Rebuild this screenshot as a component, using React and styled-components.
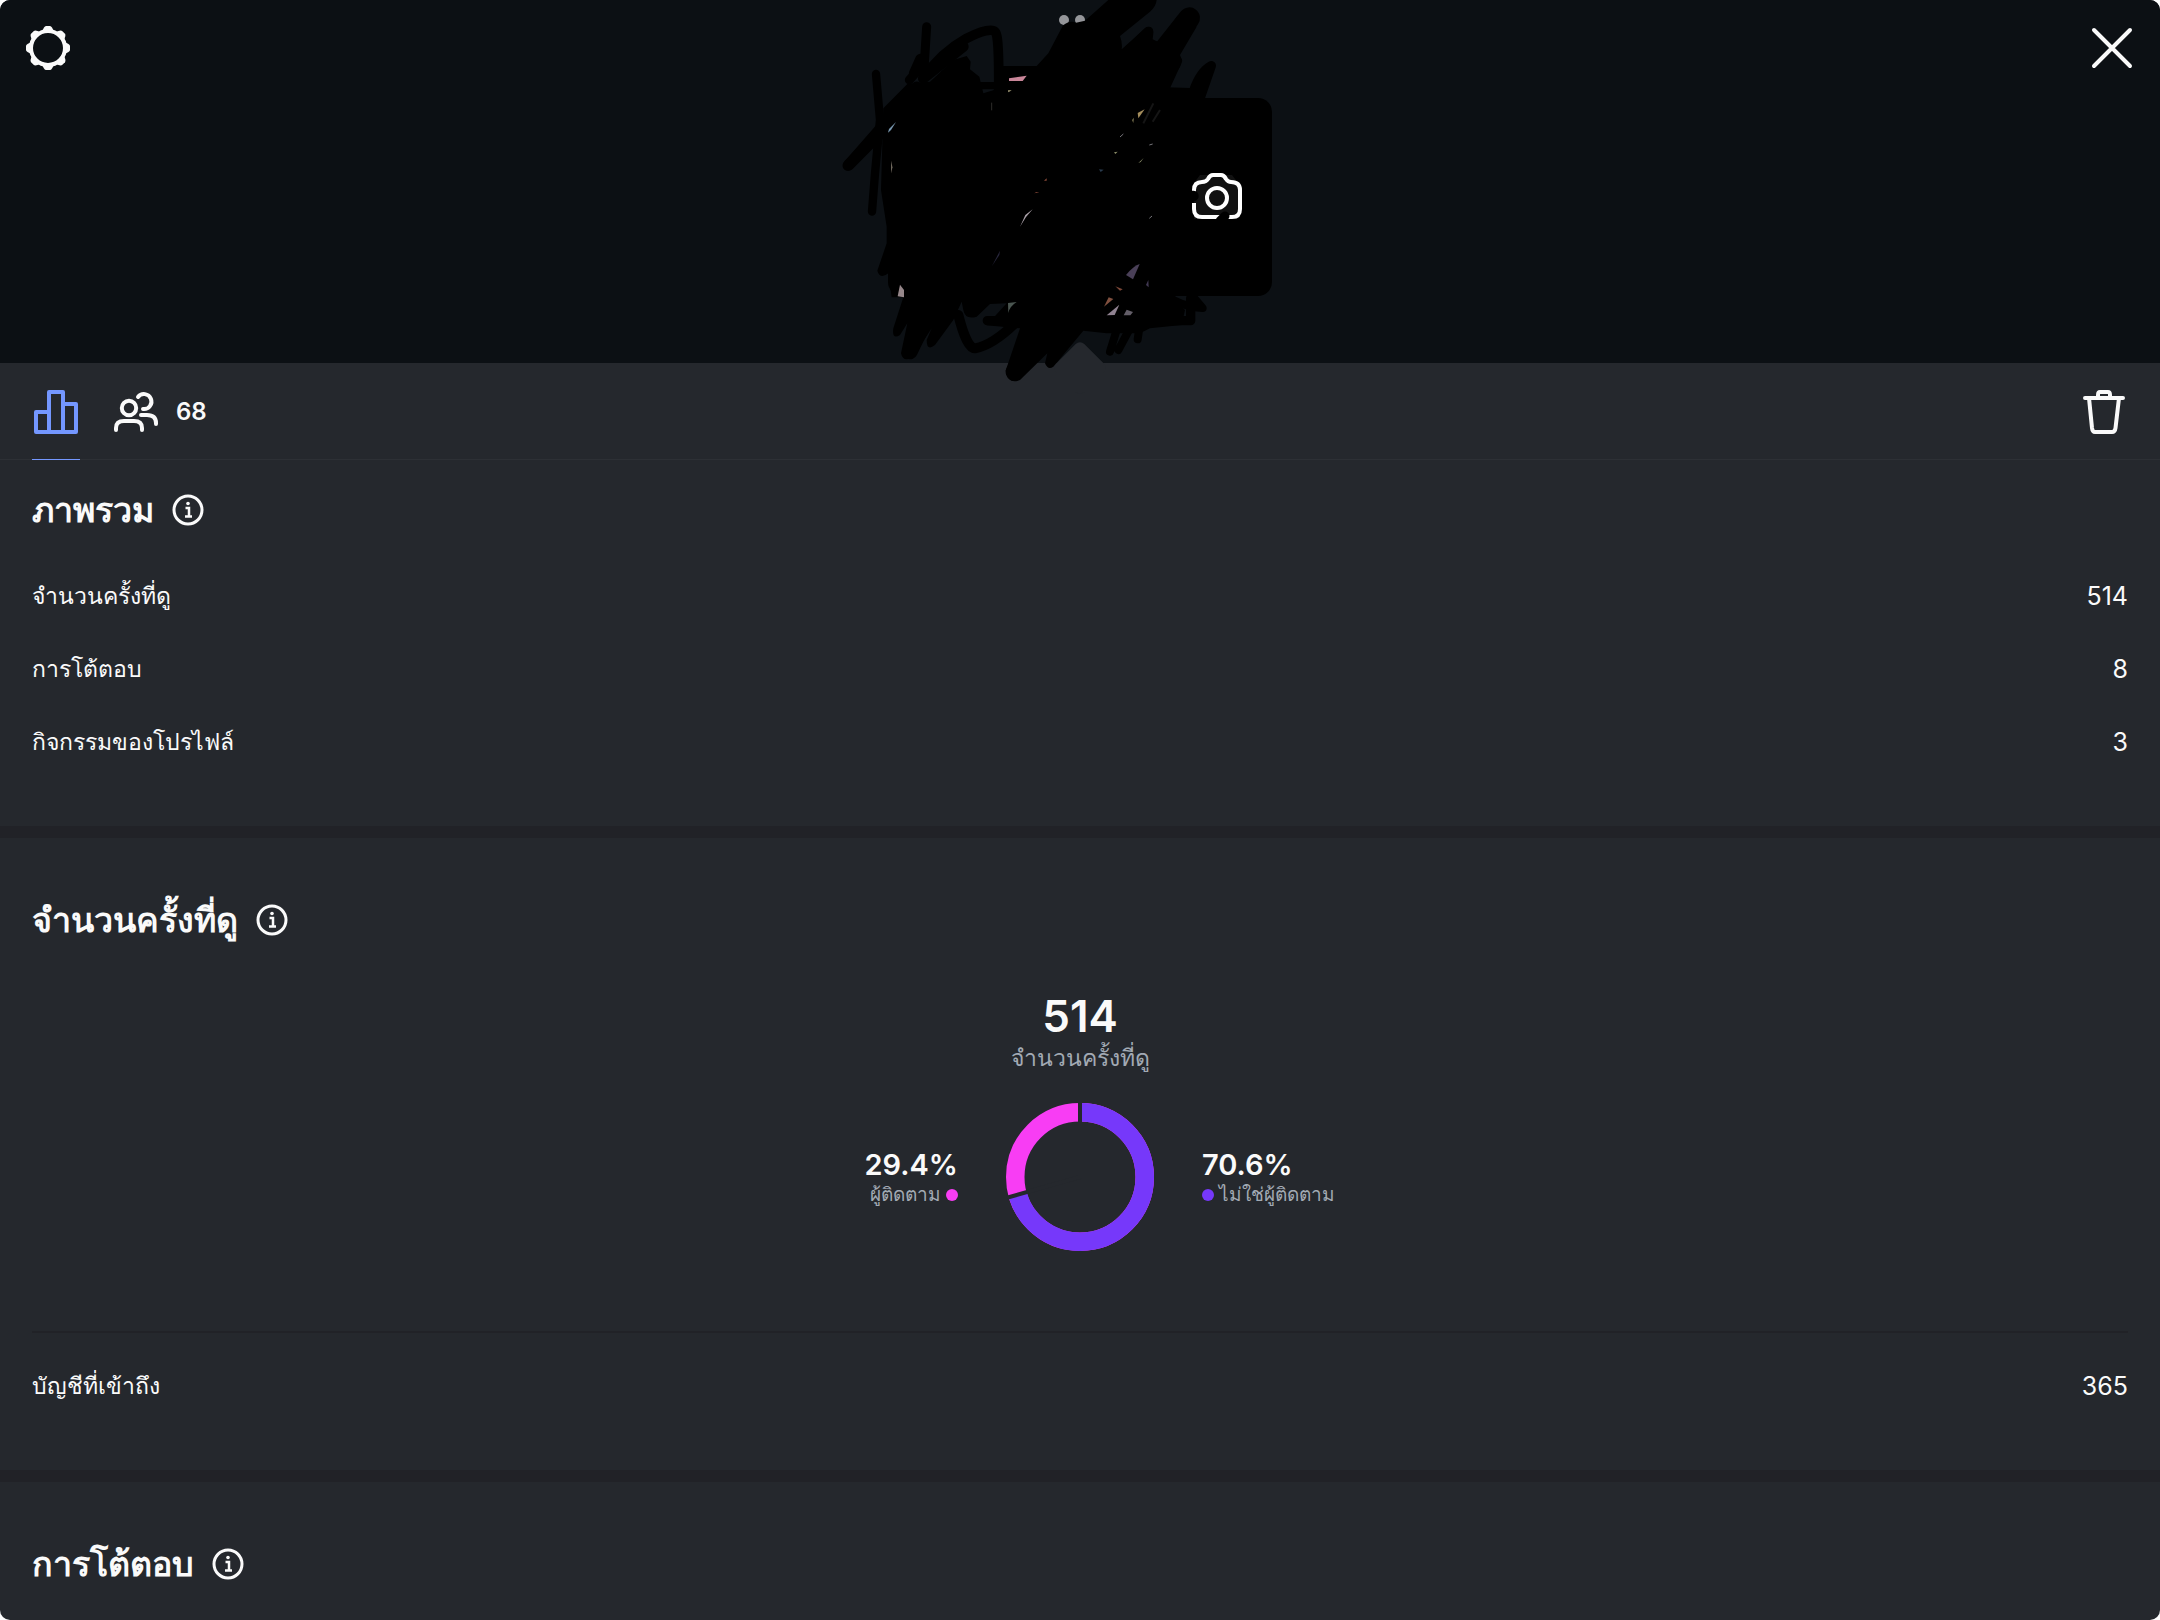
import React from 'react';
import styled, { createGlobalStyle } from 'styled-components';

const overview = [
    { label: 'จำนวนครั้งที่ดู', value: '514' },
    { label: 'การโต้ตอบ', value: '8' },
    { label: 'กิจกรรมของโปรไฟล์', value: '3' },
];

const reach = [{ label: 'บัญชีที่เข้าถึง', value: '365' }];

const followers = 29.4;

function App() {
    return (
        <>
            <GlobalStyle />
            <Container>
                <Header />
                <Insights>
                    <Toolbar />
                    <Overview>
                        <SectionTitle>ภาพรวม</SectionTitle>
                        <StatList stats={overview} />
                    </Overview>
                    <Views>
                        <SectionTitle>จำนวนครั้งที่ดู</SectionTitle>
                        <Total>
                            <TotalNumber>514</TotalNumber>
                            <TotalLabel>จำนวนครั้งที่ดู</TotalLabel>
                        </Total>
                        <Breakdown>
                            <Share $end>
                                <Percent>29.4%</Percent>
                                <Legend>
                                    ผู้ติดตาม
                                    <Dot $color="#f83df4" />
                                </Legend>
                            </Share>
                            <Donut share={followers} />
                            <Share>
                                <Percent>70.6%</Percent>
                                <Legend>
                                    <Dot $color="#7638fa" />
                                    ไม่ใช่ผู้ติดตาม
                                </Legend>
                            </Share>
                        </Breakdown>
                        <Reach>
                            <StatList stats={reach} />
                        </Reach>
                    </Views>
                    <Interactions>
                        <SectionTitle>การโต้ตอบ</SectionTitle>
                    </Interactions>
                </Insights>
            </Container>
        </>
    );
}

export default App;

function Header() {
    return (
        <Top>
            <IconButton aria-label="Settings">
                <GearIcon />
            </IconButton>
            <Stories>
                <Story aria-label="Previous story" />
                <Story aria-label="Current story" $active />
                <Story aria-label="Add to story">
                    <CameraIcon />
                </Story>
                <Scribble />
            </Stories>
            <IconButton aria-label="Close">
                <CloseIcon />
            </IconButton>
        </Top>
    );
}

function Toolbar() {
    return (
        <Bar>
            <Tab aria-label="Insights" $active>
                <ChartIcon />
            </Tab>
            <Tab aria-label="68 viewers">
                <PeopleIcon />
                <Count>68</Count>
            </Tab>
            <DeleteButton aria-label="Delete">
                <TrashIcon />
            </DeleteButton>
        </Bar>
    );
}

function SectionTitle({ children }) {
    return (
        <TitleRow>
            <Title>{children}</Title>
            <IconButton aria-label="Info">
                <InfoIcon />
            </IconButton>
        </TitleRow>
    );
}

function StatList({ stats }) {
    return (
        <List>
            {stats.map((stat) => (
                <Stat key={stat.label}>
                    <dt>{stat.label}</dt>
                    <dd>{stat.value}</dd>
                </Stat>
            ))}
        </List>
    );
}

function Donut({ share }) {
    const angle = ((100 - share) / 100) * Math.PI * 2;
    const x = 74 + Math.sin(angle) * 76;
    const y = 74 - Math.cos(angle) * 76;

    return (
        <svg width="148" height="148" viewBox="0 0 148 148" fill="none" role="img" aria-label="Followers and non-followers">
            <g transform="rotate(-90 74 74)" strokeWidth="18.5">
                <circle cx="74" cy="74" r="64.75" stroke="#f83df4" />
                <circle cx="74" cy="74" r="64.75" stroke="#7638fa" pathLength="100" strokeDasharray={`${100 - share} ${share}`} />
            </g>
            <path d={`M74 0V74L${x} ${y}`} stroke="#25282d" strokeWidth="4" />
        </svg>
    );
}

function GearIcon() {
    const teeth = [0, 45, 90, 135, 180, 225, 270, 315];
    return (
        <svg width="48" height="48" viewBox="0 0 48 48" fill="none">
            <circle cx="24" cy="24" r="17" stroke="#fafafa" strokeWidth="4" />
            {teeth.map((deg) => (
                <path key={deg} d="M18 8Q20 2 22 2H26Q28 2 30 8Z" fill="#fafafa" transform={`rotate(${deg} 24 24)`} />
            ))}
        </svg>
    );
}

function CloseIcon() {
    return (
        <svg width="48" height="48" viewBox="0 0 48 48" fill="none" stroke="#fafafa" strokeWidth="4" strokeLinecap="round">
            <path d="M6 6L42 42M42 6L6 42" />
        </svg>
    );
}

function CameraIcon() {
    return (
        <svg width="52" height="52" viewBox="1 0 52 52" fill="none" stroke="#fff" strokeWidth="4">
            <path d="M10 4H42L48 12V48H4V12Z" fill="#111" stroke="none" />
            <path d="M4 21V19Q4 11 12 11Q16 11 18 8Q20 4 23 4H31Q34 4 36 8Q38 11 41 11Q50 11 50 19V38Q50 46 42 46H12Q4 46 4 38V32" />
            <circle cx="27" cy="27" r="10" />
            <path d="M30 50L35 45" stroke="#000" strokeWidth="9" strokeLinecap="round" />
        </svg>
    );
}

function ChartIcon() {
    return (
        <svg width="48" height="48" viewBox="0 0 48 48" fill="none" stroke="#7497ff" strokeWidth="4" strokeLinejoin="round">
            <path d="M4 24H17V44H4ZM17 4H31V44H17ZM31 16H44V44H31Z" />
        </svg>
    );
}

function PeopleIcon() {
    return (
        <svg width="48" height="48" viewBox="0 1 48 48" fill="none" stroke="#fafafa" strokeWidth="4" strokeLinecap="round">
            <circle cx="17" cy="21" r="7.200" />
            <path d="M4 43V41Q4 34 12 34H22Q30 34 30 41V43" />
            <path d="M26 10A7.500 7.500 0 1 1 31 22" />
            <path d="M29 28H35Q44 28 44 36V37" />
        </svg>
    );
}

function TrashIcon() {
    return (
        <svg width="48" height="48" viewBox="0 0 48 48" fill="none" stroke="#fafafa" strokeWidth="4" strokeLinecap="round" strokeLinejoin="round">
            <path d="M5 10H43M9 10L12 40Q12.500 44 15 44H32Q35 44 35.500 40L39 10" />
            <path d="M18 9V7Q18 4 20 4H28Q30 4 30 7V9" />
        </svg>
    );
}

function InfoIcon() {
    return (
        <svg width="32" height="32" viewBox="0 0 32 32" fill="none" stroke="#fafafa">
            <circle cx="16" cy="16" r="14" strokeWidth="3" />
            <path d="M13.500 14H17V22M13 22.500H20" strokeWidth="2.500" />
            <circle cx="16" cy="9.500" r="1.800" fill="#fafafa" stroke="none" />
        </svg>
    );
}

// marker strokes drawn over the story previews, with scraps of the photos left between them
function Scribble() {
    return (
        <Marker viewBox="0 0 1440 1200" fill="none" aria-hidden="true">
            <circle cx="732" cy="60" r="15" fill="#95969a" />
            <circle cx="780" cy="60" r="15" fill="#95969a" />
            <path
                fill="#000"
                d="M190 325L262 252L330 245L400 180L440 168L452 185L450 208L478 230L490 280L522 270L530 198H650L685 160L728 78Q748 60 768 68L795 62L865 0H1010Q1008 20 990 35L900 108Q908 130 905 148L980 82Q1000 75 1000 100L998 118L1015 126L1075 45L1130 80L1080 165Q1088 180 1080 200L1040 262L1110 264L1140 298L1050 320V885L1095 930L1085 975L990 985L960 1000H860L790 992L700 1100Q684 1112 675 1090L682 1060L600 1140Q565 1155 557 1112L600 985L500 976L560 910L510 912L470 950Q435 960 430 930L425 905L400 960L345 1035Q320 1055 320 1020L335 985L280 1070Q250 1090 243 1060L262 970L240 1005Q215 1020 220 985L250 892H215L205 820Q180 840 172 812L200 730V680L183 570Z"
            />
            <g stroke="#000" strokeLinecap="round" strokeLinejoin="round">
                <path d="M83 497L290 260" strokeWidth="31" />
                <path d="M86 495L190 390" strokeWidth="34" />
                <path d="M168 222L180 360L165 520L156 635" strokeWidth="25" />
                <path d="M320 80L313 190L268 240M300 175L280 220" strokeWidth="27" />
                <path d="M310 235Q360 160 440 115Q510 80 525 95Q538 100 536 280" strokeWidth="29" />
                <path d="M310 235L430 140" strokeWidth="32" />
                <path d="M455 257H535" strokeWidth="22" />
                <path d="M1000 190L1108 54" strokeWidth="64" />
                <path d="M985 95L880 195" strokeWidth="30" />
                <path d="M1074 182L1020 300" strokeWidth="25" />
                <path d="M1174 197Q1140 215 1120 275M1174 197L1135 310" strokeWidth="28" />
                <path d="M1000 280H1115" strokeWidth="30" />
                <path d="M415 945Q440 1045 465 1045Q520 1035 590 965" strokeWidth="30" />
                <path d="M502 962H1112V895" strokeWidth="28" />
                <path d="M1040 885Q1080 920 1148 924L1115 885" strokeWidth="24" />
                <path d="M870 1055L890 990M895 1050L970 910M953 1018L960 970" strokeWidth="24" />
                <path d="M584 1116L640 1010" strokeWidth="54" />
                <path d="M270 1055L330 930" strokeWidth="46" />
                <path d="M1113 590L1120 588" strokeWidth="32" />
            </g>
            <path d="M567 243V235L620 227L608 243Z" fill="#c98699" />
            <path d="M564 271H575L565 277Z" fill="#aaa27b" />
            <path d="M204 398L207 387L228 366L213 390Z" fill="#7998b1" />
            <path d="M214 482L217 502L214 520Z" fill="#a39889" />
            <path d="M233 889L240 854L252 870V892Z" fill="#96878a" />
            <path d="M600 680L616 645L638 628Q616 650 600 680Z" fill="#aaa0a8" />
            <path d="M672 542L680 535V542ZM643 580L649 576L658 577Z" fill="#8b4a38" />
            <path d="M564 909L590 906Q568 920 565 939Z" fill="#4a5550" />
            <path d="M852 920L866 892L880 897Z" fill="#81503f" />
            <path d="M886 859L908 868L900 872Z" fill="#7d4838" />
            <path d="M860 946L898 914L884 945Z" fill="#908291" />
            <path d="M911 946L920 929L939 936L931 946Z" fill="#635e68" />
            <path d="M918 825Q942 796 959 792L939 838Z" fill="#4a4058" />
            <path d="M978 855L985 840L986 862Z" fill="#403852" />
            <path d="M953 339L974 328L955 355Z" fill="#a48d5c" />
            <path d="M936 360L942 353L940 369Z" fill="#77704d" />
            <path d="M882 457L893 455L886 462ZM955 489L971 474L962 486Z" fill="#898b67" />
            <path d="M900 411L910 402M988 435L998 432M988 655L996 648" stroke="#77767b" strokeWidth="3" />
            <path d="M515 308V331" stroke="#45443f" strokeWidth="2" />
            <path d="M516 798L540 752L538 765Z" fill="#28263c" />
            <path d="M837 508L851 509L842 516Z" fill="#293b4e" />
            <path d="M970 370L1000 310M998 365L1020 330" stroke="#151515" strokeWidth="6" />
        </Marker>
    );
}

const GlobalStyle = createGlobalStyle`
    * {
        box-sizing: border-box;
    }

    body {
        margin: 0;
        background: #fff;
        color: #fafafa;
        font-family: Inter, "Noto Sans", sans-serif;
        font-size: 23px;
        line-height: 32px;
    }

    button {
        display: flex;
        align-items: center;
        border: 0;
        padding: 0;
        background: none;
        color: inherit;
        font: inherit;
        cursor: pointer;
    }

    svg {
        display: block;
        flex-shrink: 0;
    }
`;

const Container = styled.div`
    display: flex;
    flex-direction: column;
    min-height: 100vh;
    border-radius: 10px;
    overflow: hidden;
    background: #25282d;
`;

const Top = styled.header`
    display: flex;
    align-items: flex-start;
    justify-content: space-between;
    padding: 24px 24px 43px;
    background: #0c1014;
`;

const IconButton = styled.button``;

const Stories = styled.div`
    position: relative;
    display: flex;
    align-items: center;
    gap: 10px;
    padding-top: 50px;

    &::after {
        content: '';
        position: absolute;
        bottom: -68px;
        left: calc(50% - 20px);
        width: 40px;
        height: 40px;
        border-radius: 6px;
        background: #25282d;
        transform: rotate(45deg);
    }
`;

const Story = styled.button`
    justify-content: center;
    width: ${(props) => (props.$active ? '142px' : '111px')};
    height: ${(props) => (props.$active ? '246px' : '198px')};
    border-radius: 14px;
    background: #000;
`;

const Marker = styled.svg`
    position: absolute;
    z-index: 1;
    top: -24px;
    left: calc(50% - 260px);
    width: 480px;
    height: 400px;
    pointer-events: none;
`;

const Insights = styled.main``;

const Bar = styled.nav`
    display: flex;
    gap: 32px;
    height: 97px;
    padding: 0 32px;
    border-bottom: 1px solid #2d3035;
`;

const Tab = styled.button`
    gap: 16px;
    margin-bottom: -1px;
    padding-top: 2px;
    border-bottom: 1px solid ${(props) => (props.$active ? '#7497ff' : 'transparent')};
`;

const Count = styled.span`
    font-size: 24px;
    font-weight: 600;
`;

const DeleteButton = styled.button`
    margin-left: auto;
    padding-top: 2px;
`;

const Section = styled.section`
    padding: 0 32px;
`;

const Overview = styled(Section)`
    padding-top: 26px;
    padding-bottom: 48px;
    border-bottom: 12px solid #212227;
`;

const Views = styled(Section)`
    padding-top: 58px;
    padding-bottom: 48px;
    border-bottom: 12px solid #212227;
`;

const Interactions = styled(Section)`
    padding-top: 58px;
`;

const TitleRow = styled.div`
    display: flex;
    align-items: center;
    gap: 18px;
    height: 48px;
`;

const Title = styled.h2`
    margin: 0;
    font-size: 34px;
    font-weight: 600;
    line-height: 48px;
`;

const List = styled.dl`
    margin: 0;
    padding-top: 25px;
`;

const Stat = styled.div`
    display: flex;
    align-items: center;
    justify-content: space-between;
    height: 73px;

    dd {
        margin: 0;
        font-size: 25px;
    }
`;

const Total = styled.div`
    display: flex;
    flex-direction: column;
    align-items: center;
    padding-top: 46px;
`;

const TotalNumber = styled.strong`
    font-size: 44px;
    font-weight: 600;
    line-height: 52px;
`;

const TotalLabel = styled.span`
    color: #a2aab4;
`;

const Breakdown = styled.div`
    display: grid;
    grid-template-columns: 1fr auto 1fr;
    align-items: center;
    gap: 48px;
    padding: 29px 0 80px;
`;

const Share = styled.div`
    display: flex;
    flex-direction: column;
    align-items: ${(props) => (props.$end ? 'flex-end' : 'flex-start')};
    padding-top: 4px;
`;

const Percent = styled.strong`
    font-size: 29px;
    font-weight: 600;
`;

const Legend = styled.span`
    display: flex;
    align-items: center;
    gap: 5px;
    color: #a2aab4;
    font-size: 19px;
    line-height: 28px;
`;

const Dot = styled.i`
    width: 12px;
    height: 12px;
    border-radius: 50%;
    background: ${(props) => props.$color};
`;

const Reach = styled.div`
    border-top: 2px solid #212227;

    dl {
        padding-top: 16px;
    }
`;
